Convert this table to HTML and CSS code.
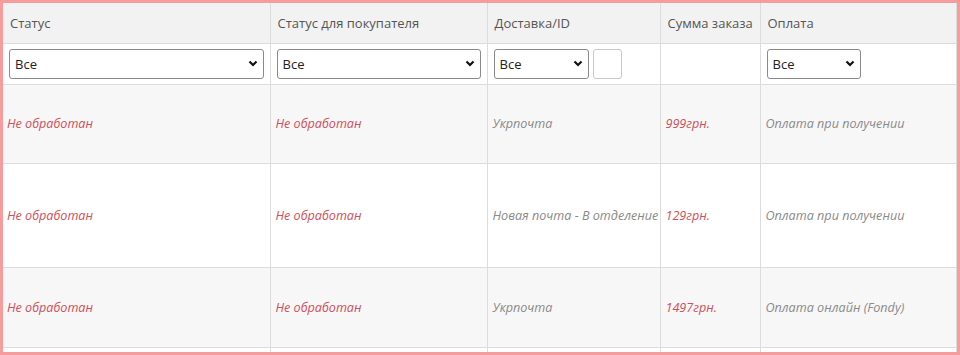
FILE: index.html
```html
<!DOCTYPE html>
<html lang="ru">
<head>
<meta charset="utf-8">
<title>Заказы</title>
<link rel="stylesheet" href="styles.css">
</head>
<body>
<div class="frame">
  <table class="orders">
    <colgroup>
      <col class="c1"><col class="c2"><col class="c3"><col class="c4"><col class="c5">
    </colgroup>
    <thead>
      <tr class="head">
        <th>Статус</th>
        <th>Статус для покупателя</th>
        <th>Доставка/ID</th>
        <th>Сумма заказа</th>
        <th>Оплата</th>
      </tr>
      <tr class="filters">
        <td><div class="select full"><span>Все</span><svg class="chev" width="10" height="7" viewBox="0 0 10 7"><path d="M1.5 1.5 L5 5 L8.5 1.5" fill="none" stroke="#111" stroke-width="2.2"/></svg></div></td>
        <td><div class="select full"><span>Все</span><svg class="chev" width="10" height="7" viewBox="0 0 10 7"><path d="M1.5 1.5 L5 5 L8.5 1.5" fill="none" stroke="#111" stroke-width="2.2"/></svg></div></td>
        <td><div class="inline"><div class="select w95"><span>Все</span><svg class="chev" width="10" height="7" viewBox="0 0 10 7"><path d="M1.5 1.5 L5 5 L8.5 1.5" fill="none" stroke="#111" stroke-width="2.2"/></svg></div><div class="idbox"></div></div></td>
        <td></td>
        <td><div class="select w94"><span>Все</span><svg class="chev" width="10" height="7" viewBox="0 0 10 7"><path d="M1.5 1.5 L5 5 L8.5 1.5" fill="none" stroke="#111" stroke-width="2.2"/></svg></div></td>
      </tr>
    </thead>
    <tbody>
      <tr class="r1 odd">
        <td class="red">Не обработан</td>
        <td class="red">Не обработан</td>
        <td class="gray">Укрпочта</td>
        <td class="red">999грн.</td>
        <td class="gray">Оплата при получении</td>
      </tr>
      <tr class="r2">
        <td class="red">Не обработан</td>
        <td class="red">Не обработан</td>
        <td class="gray">Новая почта - В отделение</td>
        <td class="red">129грн.</td>
        <td class="gray">Оплата при получении</td>
      </tr>
      <tr class="r3 odd">
        <td class="red">Не обработан</td>
        <td class="red">Не обработан</td>
        <td class="gray">Укрпочта</td>
        <td class="red">1497грн.</td>
        <td class="gray">Оплата онлайн (Fondy)</td>
      </tr>
      <tr class="r4">
        <td></td><td></td><td></td><td></td><td></td>
      </tr>
    </tbody>
  </table>
</div>
</body>
</html>
```
FILE: styles.css
```css
* { box-sizing: border-box; }
html, body { margin: 0; padding: 0; background: #fff; }
body { font-family: "Open Sans", "Liberation Sans", sans-serif; font-size: 13px; color: #555; }

.frame {
  width: 960px;
  height: 355px;
  border: 3px solid #f79c9c;
  overflow: hidden;
}

.orders {
  width: 953px;
  table-layout: fixed;
  border-collapse: collapse;
}
.c1 { width: 267px; }
.c2 { width: 217px; }
.c3 { width: 173px; }
.c4 { width: 100px; }
.c5 { width: 196px; }

.orders th, .orders td {
  border: 1px solid #dcdcdc;
  padding: 0 1px 0 5px;
  text-align: left;
  vertical-align: middle;
  white-space: nowrap;
  overflow: hidden;
}
.orders tr:first-child th { border-top: none; }
.orders tr > :first-child { border-left: none; padding-left: 4px; }

.head th {
  height: 40px;
  background: #f2f2f2;
  font-weight: 400;
  color: #555;
  padding: 0 4px 0 7px;
}
.head th:first-child { padding-left: 7px; }

.filters td { height: 41px; background: #fff; padding: 0 6px; }
.filters td:first-child { padding-left: 6px; }

.select {
  height: 30px;
  border: 1px solid #8a8a8a;
  border-radius: 3px;
  background: #fff;
  display: flex;
  align-items: center;
  justify-content: space-between;
  padding: 0 5px 0 5px;
  color: #222;
  font-size: 13px;
}
.select.full { width: 100%; }
.select.w95 { width: 95px; }
.select.w94 { width: 94px; }
.chev { display: block; }

.inline { display: flex; gap: 4px; align-items: center; }
.idbox {
  width: 29px;
  height: 30px;
  border: 1px solid #c8c8c8;
  border-radius: 3px;
  background: #fff;
}

tbody td { font-style: italic; font-size: 12.6px; }
tbody tr.odd td { background: #f7f7f7; }
.r1 td { height: 79px; }
.r2 td { height: 104px; }
.r3 td { height: 80px; }
.r4 td { height: 30px; }

.red { color: #cf4f5a; }
.gray { color: #8a8a8a; }
```
